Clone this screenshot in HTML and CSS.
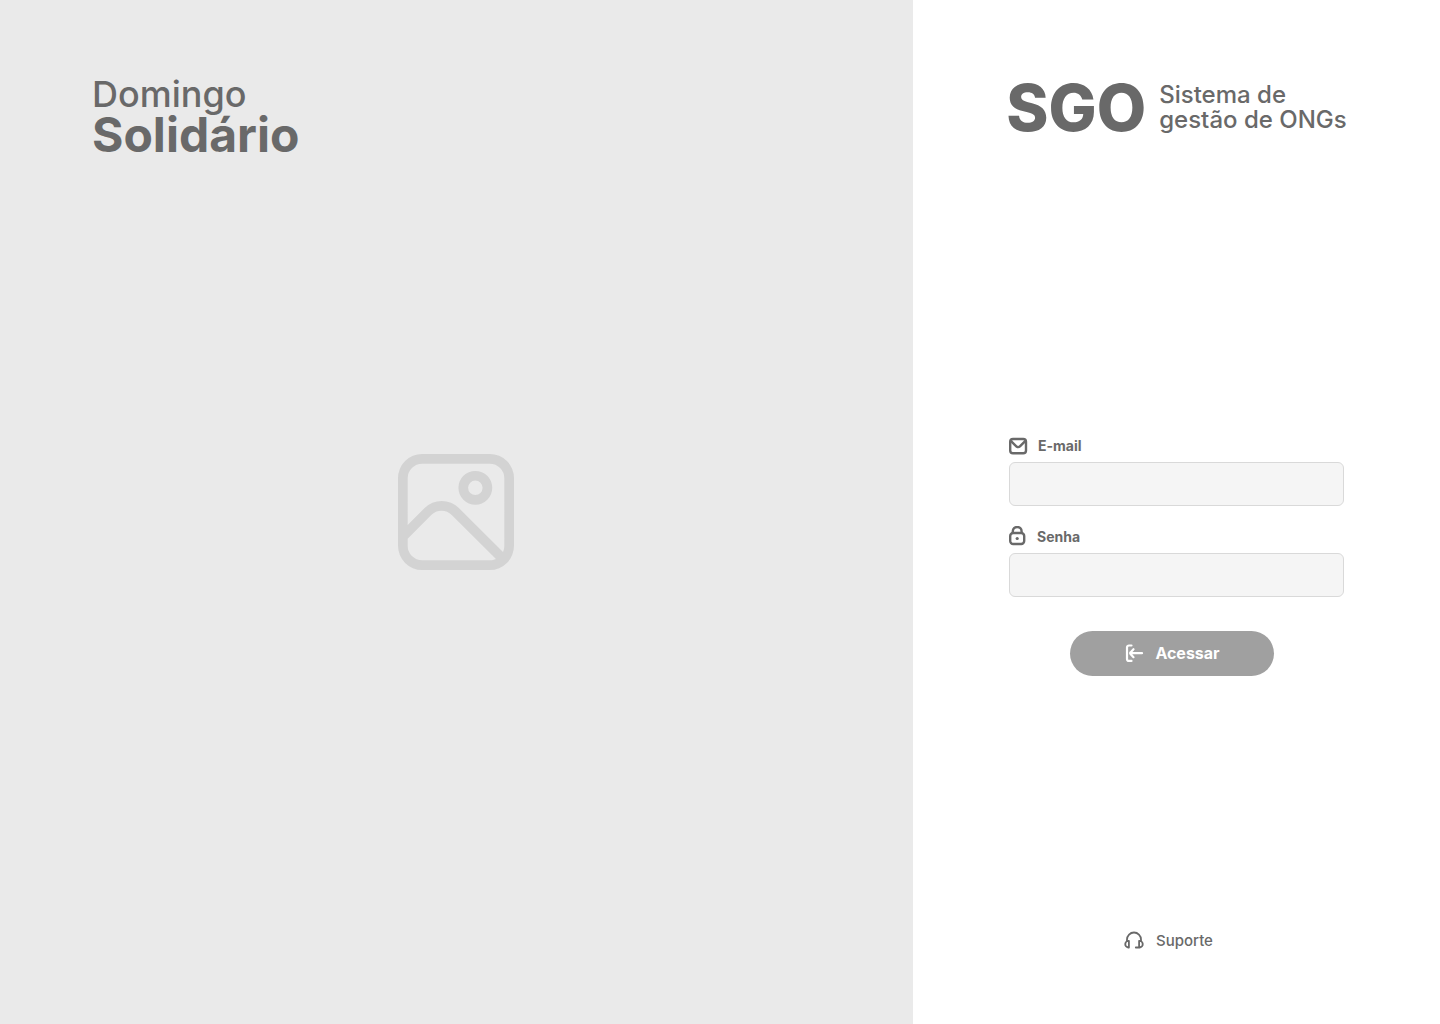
FILE: index.html
```html
<!DOCTYPE html>
<html lang="pt-BR">
<head>
<meta charset="utf-8">
<meta name="viewport" content="width=device-width, initial-scale=1">
<title>SGO - Acesso</title>
<link rel="stylesheet" href="styles.css">
</head>
<body>
<main class="page">
  <section class="cover">
    <h1 class="org"><span class="org-first">Domingo</span><span class="org-second">Solidário</span></h1>
    <svg class="placeholder" viewBox="0 0 24 24" fill="currentColor" aria-hidden="true">
      <path d="M19 0H5a5 5 0 0 0-5 5v14a5 5 0 0 0 5 5h14a5 5 0 0 0 5-5V5a5 5 0 0 0-5-5ZM5 2h14a3 3 0 0 1 3 3v14c0 .45-.1.88-.28 1.27l-9.13-9.1a5 5 0 0 0-7.08 0L2 14.7V5a3 3 0 0 1 3-3Zm0 20a3 3 0 0 1-3-3v-1.45l4.88-4.93a3 3 0 0 1 4.24 0l9.15 9.1c-.39.18-.82.28-1.27.28Z"/>
      <path d="M16 10.500a3.500 3.500 0 1 0 0-7 3.500 3.500 0 0 0 0 7Zm0-5a1.500 1.500 0 1 1 0 3 1.500 1.500 0 0 1 0-3Z"/>
    </svg>
  </section>
  <section class="panel">
    <header class="brand">
      <h2 class="brand-name">SGO</h2>
      <p class="brand-text">Sistema de<br>gestão de ONGs</p>
    </header>
    <form class="login">
      <div class="field">
        <label class="label" for="email">
          <svg class="icon" viewBox="0 0 20 20" fill="none" stroke="currentColor" stroke-width="2.400" aria-hidden="true">
            <rect x="1.200" y="3" width="15.800" height="14.300" rx="2.800"/>
            <path d="M1.800 4.800l5.500 5.600a2.500 2.500 0 0 0 3.600 0l5.500-5.600"/>
          </svg>
          E-mail
        </label>
        <input class="input" id="email" type="email">
      </div>
      <div class="field">
        <label class="label" for="senha">
          <svg class="icon icon-lock" viewBox="0 0 19 22" fill="none" stroke="currentColor" stroke-width="2.400" aria-hidden="true">
            <rect x="1.200" y="7" width="14" height="11" rx="3"/>
            <path d="M3.800 7V5.200a4.400 4.200 0 0 1 8.800 0V7"/>
            <circle cx="8.200" cy="12.500" r="1.600" fill="currentColor" stroke="none"/>
          </svg>
          Senha
        </label>
        <input class="input" id="senha" type="password">
      </div>
      <button class="submit" type="submit">
        <svg class="icon" viewBox="0 0 20 20" fill="none" stroke="currentColor" stroke-width="2.200" stroke-linecap="round" stroke-linejoin="round" aria-hidden="true">
          <path d="M7.500 2.500H5A2 2 0 0 0 3 4.500v11.400a2 2 0 0 0 2 2h2.500"/>
          <path d="M18 10.200H6.400M9.500 6.200L6.500 9.400a1.100 1.100 0 0 0 0 1.600l3 3.200"/>
        </svg>
        Acessar
      </button>
    </form>
    <a class="support" href="#suporte">
      <svg class="icon" viewBox="0 0 20 20" fill="none" stroke="currentColor" stroke-width="1.800" stroke-linecap="round" stroke-linejoin="round" aria-hidden="true">
        <path d="M3 10V8.500a7 7 0 0 1 14 0V10"/>
        <path d="M4.900 9.900v6.600h-.7a3.300 3.300 0 0 1 .7-6.600Z"/>
        <path d="M15.100 9.900v6.600h-3.300M15.100 9.900a3.300 3.300 0 0 1 .7 6.600h-.7"/>
      </svg>
      Suporte
    </a>
  </section>
</main>
</body>
</html>
```
FILE: styles.css
```css
* {
  box-sizing: border-box;
}

body {
  margin: 0;
  font-family: Inter, "Liberation Sans", sans-serif;
  color: #696969;
  background: #fff;
}

.page {
  display: grid;
  grid-template-columns: 913fr 527fr;
  min-height: 100vh;
}

.cover {
  display: grid;
  grid-template-rows: 1fr auto 1fr;
  justify-items: center;
  padding: 74px 93px 74px 92px;
  background: #eaeaea;
}

.org {
  display: flex;
  flex-direction: column;
  align-self: start;
  justify-self: start;
  gap: 1px;
  margin: 0;
}

.org-first,
.org-second {
  line-height: 40px;
}

.org-first {
  font-size: 36px;
  font-weight: 500;
}

.org-second {
  font-size: 48px;
  font-weight: 700;
}

.placeholder {
  width: 116px;
  height: 116px;
  color: #d3d3d3;
}

.panel {
  display: flex;
  flex-direction: column;
  align-items: center;
  justify-content: space-between;
  padding: 76px 24px 71px;
}

.brand {
  display: flex;
  align-items: center;
  gap: 13px;
}

.brand-name {
  margin: 0;
  font-size: 64px;
  font-weight: 800;
  line-height: 64px;
}

.brand-text {
  margin: 0;
  padding-bottom: 2px;
  font-size: 24px;
  font-weight: 500;
  line-height: 25px;
}

.login {
  display: flex;
  flex-direction: column;
  gap: 18px;
  width: 100%;
  max-width: 335px;
  padding-top: 40px;
}

.field {
  display: flex;
  flex-direction: column;
  gap: 4px;
}

.label {
  display: flex;
  align-items: center;
  gap: 9px;
  font-size: 14px;
  font-weight: 700;
  line-height: 25px;
}

.icon {
  flex: none;
  width: 20px;
  height: 20px;
}

.icon-lock {
  width: 19px;
  height: 22px;
}

.input {
  width: 100%;
  height: 44px;
  padding: 0 12px;
  font: inherit;
  color: inherit;
  background: #f5f5f5;
  border: 1px solid #d9d9d9;
  border-radius: 6px;
}

.submit {
  display: flex;
  align-items: center;
  justify-content: center;
  align-self: center;
  gap: 11px;
  width: 204px;
  height: 45px;
  margin: 16px 9px 0 0;
  padding: 0 6px 2px;
  font: inherit;
  font-size: 16px;
  font-weight: 700;
  color: #fff;
  background: #a0a0a0;
  border: 0;
  border-radius: 24px;
}

.support {
  display: flex;
  align-items: center;
  gap: 12px;
  margin-right: 16px;
  font-size: 15px;
  font-weight: 500;
  line-height: 24px;
  color: inherit;
  text-decoration: none;
}
```
